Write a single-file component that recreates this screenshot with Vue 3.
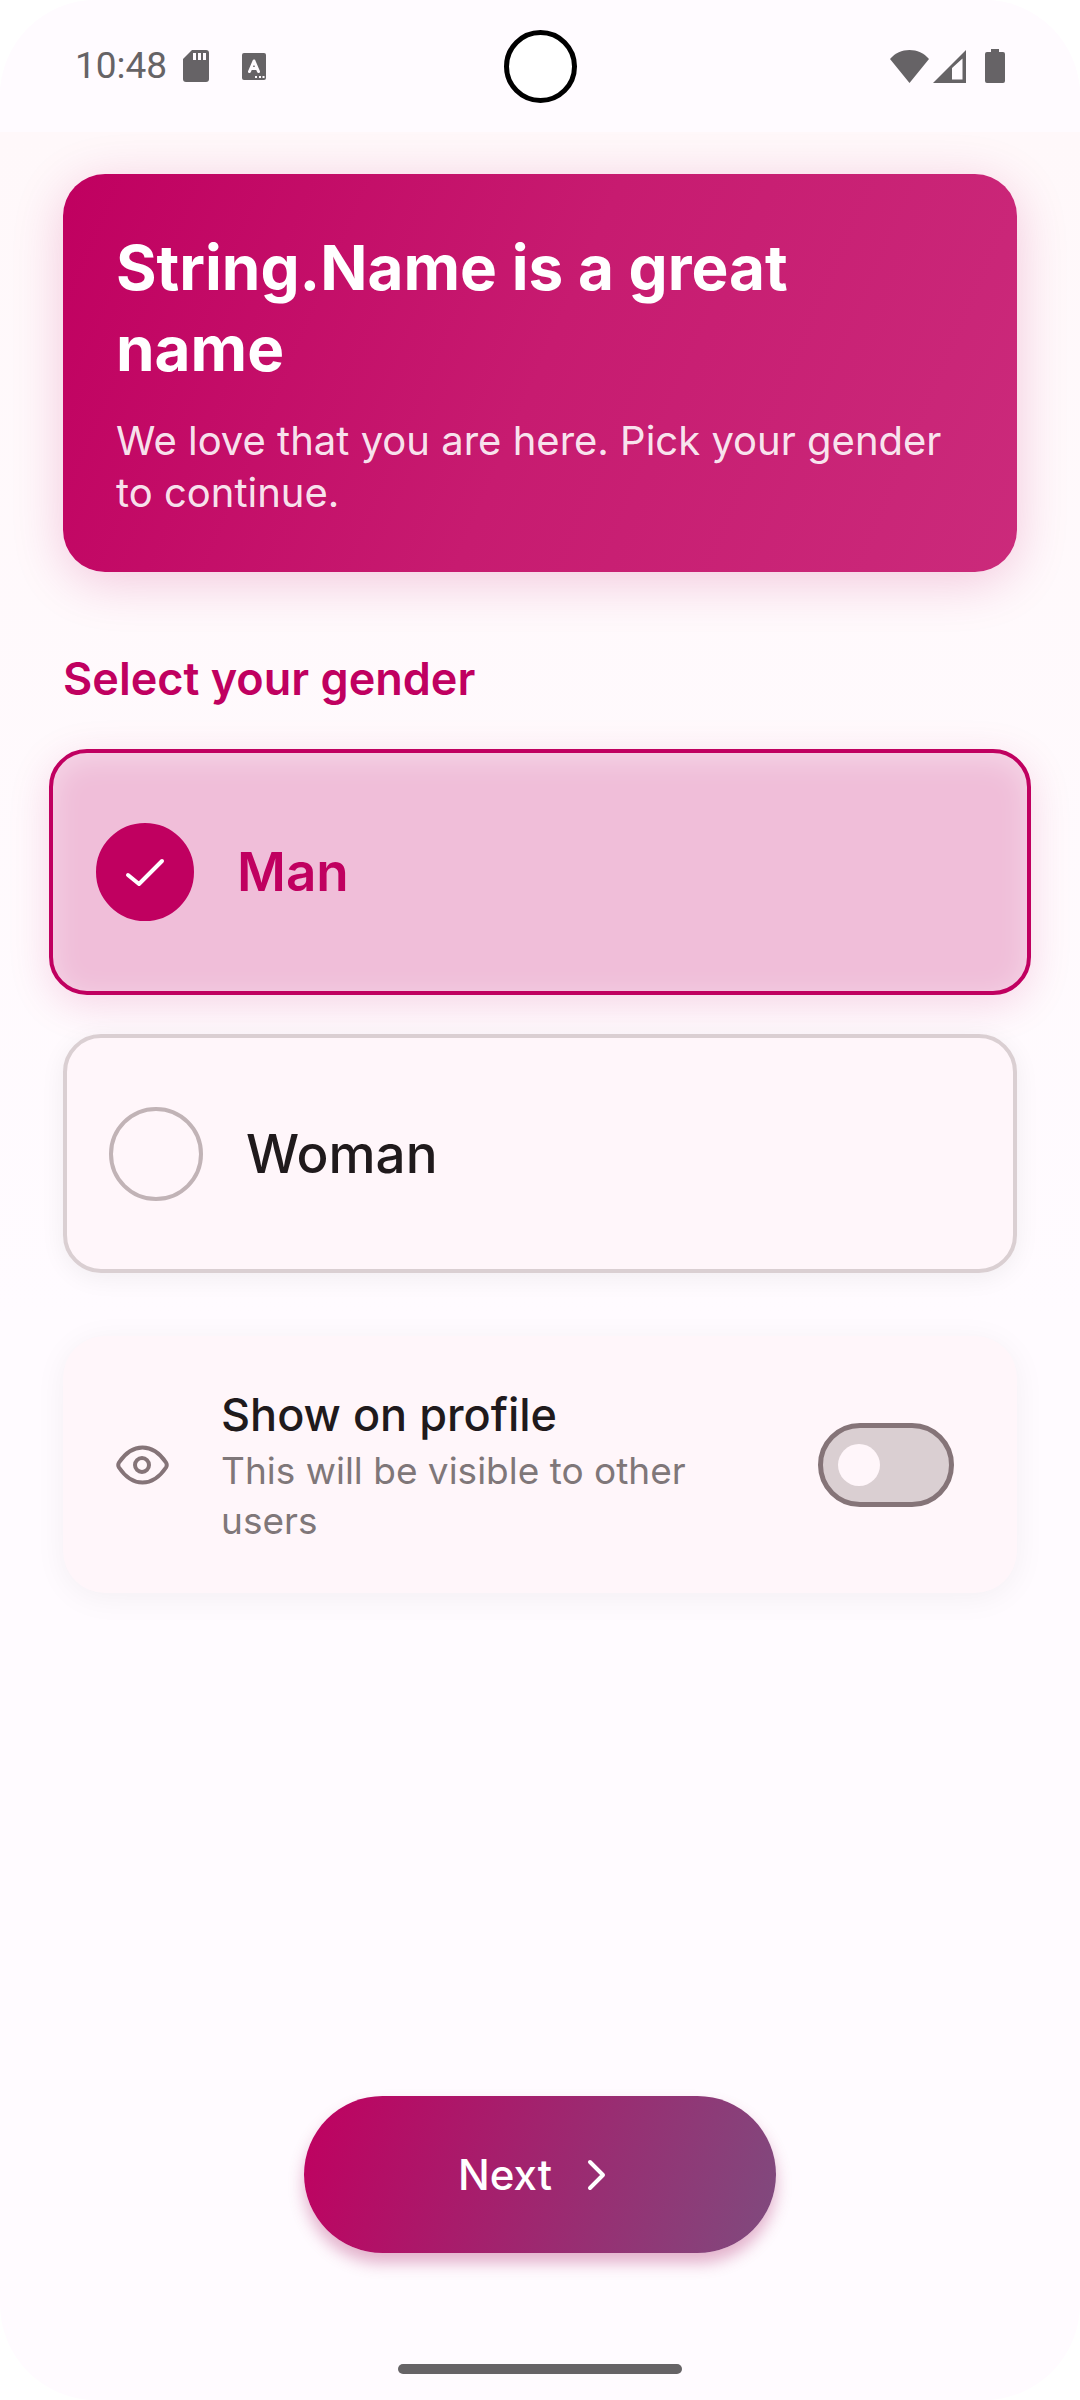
<script setup>
import { ref } from 'vue'

const options = [
  { value: 'man', label: 'Man' },
  { value: 'woman', label: 'Woman' },
]
const gender = ref('man')
const showOnProfile = ref(false)
</script>

<template>
  <div class="screen">
    <header class="status">
      <div class="status-side">
        <span class="time">10:48</span>
        <svg class="sd" width="26" height="32" viewBox="0 0 26 32" aria-hidden="true">
          <path fill="#666366" d="M9 0H23a3 3 0 0 1 3 3V29a3 3 0 0 1-3 3H3a3 3 0 0 1-3-3V9z" />
          <path stroke="#fffbff" stroke-width="3" d="M11.500 3v7M16.500 3v7M21.500 3v7" />
        </svg>
        <svg width="24" height="27" viewBox="0 0 24 27" aria-hidden="true">
          <rect width="24" height="27" rx="2" fill="#666366" />
          <path fill="none" stroke="#fffbff" stroke-width="3" stroke-linecap="round" stroke-linejoin="round" d="M7.500 18.500 12 8l4.500 10.500M9.500 15.500h5" />
          <path fill="#fffbff" d="M13 23h2v2h-2zM17 23h2v2h-2zM20.500 23h2v2h-2z" />
        </svg>
      </div>
      <span class="camera" />
      <div class="status-side status-end">
        <svg width="39" height="33" viewBox="0 0 39 33" aria-hidden="true">
          <path fill="#666366" d="M0 9C5 3 12 0 19.500 0S34 3 39 9L19.500 33z" />
        </svg>
        <svg class="signal" width="33" height="33" viewBox="0 0 33 33" aria-hidden="true">
          <path fill="#666366" fill-rule="evenodd" d="M0 33 33 0V33zM19 18V29.500H29.500V8.500z" />
        </svg>
        <svg width="20" height="34" viewBox="0 0 20 34" aria-hidden="true">
          <path fill="#666366" d="M6 0h8v3h4a2 2 0 0 1 2 2v27a2 2 0 0 1-2 2H2a2 2 0 0 1-2-2V5a2 2 0 0 1 2-2h4z" />
        </svg>
      </div>
    </header>

    <main class="content">
      <section class="hero">
        <h1>String.Name is a great name</h1>
        <p>We love that you are here. Pick your gender to continue.</p>
      </section>

      <fieldset class="genders">
        <legend>Select your gender</legend>
        <label
          v-for="option in options"
          :key="option.value"
          class="option"
          :class="{ selected: gender === option.value }"
        >
          <span class="mark">
            <input v-model="gender" type="radio" name="gender" :value="option.value" />
            <svg v-if="gender === option.value" viewBox="0 0 98 98" aria-hidden="true">
              <path d="M32 52 43 61 66 38" />
            </svg>
          </span>
          <span>{{ option.label }}</span>
        </label>
      </fieldset>

      <label class="visibility">
        <svg class="eye" width="53" height="53" viewBox="0 0 53 53" aria-hidden="true">
          <path d="M3 24.500C9 15.500 17 9.500 26.500 9.500S44 15.500 50 24.500Q51.500 27 50 29.500C44 38.500 36 44.500 26.500 44.500S9 38.500 3 29.500Q1.500 27 3 24.500z" />
          <circle cx="26" cy="27" r="7" />
        </svg>
        <span class="visibility-text">
          <span class="visibility-title">Show on profile</span>
          <span class="visibility-note">This will be visible to other users</span>
        </span>
        <input v-model="showOnProfile" class="switch" type="checkbox" role="switch" />
      </label>

      <button class="next" type="button">
        <span>Next</span>
        <svg width="42" height="42" viewBox="0 0 42 42" aria-hidden="true">
          <path d="M14 8 27 21 14 34" />
        </svg>
      </button>
    </main>

    <footer class="nav"><span class="pill" /></footer>
  </div>
</template>

<style>
html,
body {
  margin: 0;
  background: #fff;
}
</style>

<style scoped>
* {
  box-sizing: border-box;
}
.screen {
  display: flex;
  flex-direction: column;
  min-height: 100vh;
  border-radius: 96px;
  overflow: hidden;
  background: #fffbff;
  color: #201a1c;
  font-family: Inter, "Open Sans", sans-serif;
}
.status {
  display: flex;
  align-items: center;
  height: 132px;
  padding: 0 75px;
  background: #fffbff;
}
.status-side {
  display: flex;
  flex: 1;
  align-items: center;
}
.status-end {
  justify-content: flex-end;
}
.time {
  margin-right: 16px;
  color: #666366;
  font: 37px/44px Roboto, sans-serif;
}
.sd {
  margin-right: 33px;
}
.signal {
  margin: 0 19px 0 4px;
}
.camera {
  width: 73px;
  height: 73px;
  border: 5px solid #000;
  border-radius: 50%;
  background: #fff;
}
.content {
  display: flex;
  flex: 1;
  flex-direction: column;
  padding: 42px 63px 0;
  background: linear-gradient(#fff8fa, #fffbff 56%);
}
.hero {
  padding: 53px 63px 53px 53px;
  border-radius: 42px;
  background: linear-gradient(113deg, #c00060, #c71b70 50%, #cb2a7b);
  box-shadow: 0 10px 52px rgba(192, 0, 96, 0.2);
}
.hero h1 {
  margin: 0 0 26px;
  color: #fff;
  font-size: 62px;
  font-weight: 700;
  line-height: 81px;
}
.hero p {
  margin: 0;
  color: rgba(255, 255, 255, 0.9);
  font-size: 40px;
  line-height: 52px;
}
.genders {
  display: flex;
  flex-direction: column;
  gap: 39px;
  min-width: 0;
  margin: 75px 0 0;
  padding: 0;
  border: 0;
}
.genders legend {
  margin-bottom: 39px;
  padding: 0;
  color: #c00060;
  font-size: 45px;
  font-weight: 600;
  line-height: 63px;
}
.option {
  display: flex;
  gap: 43px;
  align-items: center;
  height: 239px;
  padding: 0 42px;
  border: 4px solid #dacfd2;
  border-radius: 38px;
  background: #fff6fa;
  box-shadow: 0 5px 26px rgba(0, 0, 0, 0.06);
  font-size: 53px;
  font-weight: 500;
}
.option.selected {
  height: 246px;
  margin: 0 -14px;
  padding: 0 43px;
  border-color: #c00060;
  background: #f0bed9;
  box-shadow: 0 10px 42px rgba(192, 0, 96, 0.15), inset 0 6px 30px rgba(255, 255, 255, 0.4);
  color: #c00060;
  font-weight: 600;
}
.mark {
  position: relative;
  width: 94px;
  height: 94px;
}
.mark input {
  display: block;
  width: 100%;
  height: 100%;
  margin: 0;
  border: 4px solid #c1b3b6;
  border-radius: 50%;
  appearance: none;
}
.selected .mark {
  width: 98px;
  height: 98px;
}
.selected .mark input {
  border-color: #c00060;
  background: #c00060;
}
.mark svg {
  position: absolute;
  inset: 0;
  pointer-events: none;
}
.mark path,
.next path {
  fill: none;
  stroke: #fff;
  stroke-width: 4;
  stroke-linecap: round;
  stroke-linejoin: round;
}
.visibility {
  display: flex;
  gap: 52px;
  align-items: center;
  margin-top: 63px;
  padding: 47px 63px 47px 53px;
  border-radius: 42px;
  background: #fff6fa;
  box-shadow: 0 5px 32px rgba(0, 0, 0, 0.05);
}
.eye {
  flex: none;
}
.eye path,
.eye circle {
  fill: none;
  stroke: #857478;
  stroke-width: 4;
  stroke-linejoin: round;
}
.visibility-text {
  display: flex;
  flex: 1;
  flex-direction: column;
  padding-right: 63px;
}
.visibility-title {
  font-size: 45px;
  font-weight: 500;
  line-height: 63px;
}
.visibility-note {
  color: #7f7779;
  font-size: 37px;
  line-height: 50px;
}
.switch {
  display: flex;
  flex: none;
  align-items: center;
  width: 136px;
  height: 84px;
  margin: 0;
  padding: 0 15px;
  border: 5px solid #857478;
  border-radius: 42px;
  background: #dacfd2;
  appearance: none;
}
.switch::before {
  width: 42px;
  height: 42px;
  border-radius: 50%;
  background: #fff6fa;
  content: "";
}
.switch:checked {
  justify-content: flex-end;
  background: #c00060;
}
.next {
  display: flex;
  gap: 24px;
  align-items: center;
  justify-content: center;
  width: 472px;
  height: 157px;
  margin: auto auto 0;
  padding: 0 4px 0 0;
  border: 0;
  border-radius: 79px;
  background: linear-gradient(108deg, #c00060, #7f4b7e);
  box-shadow: 0 10px 16px rgba(160, 0, 80, 0.3);
  color: #fff;
  font-family: inherit;
  font-size: 42px;
  font-weight: 500;
}
.nav {
  display: flex;
  justify-content: center;
  padding: 111px 0 26px;
}
.pill {
  width: 284px;
  height: 10px;
  border-radius: 5px;
  background: #666366;
}
</style>
